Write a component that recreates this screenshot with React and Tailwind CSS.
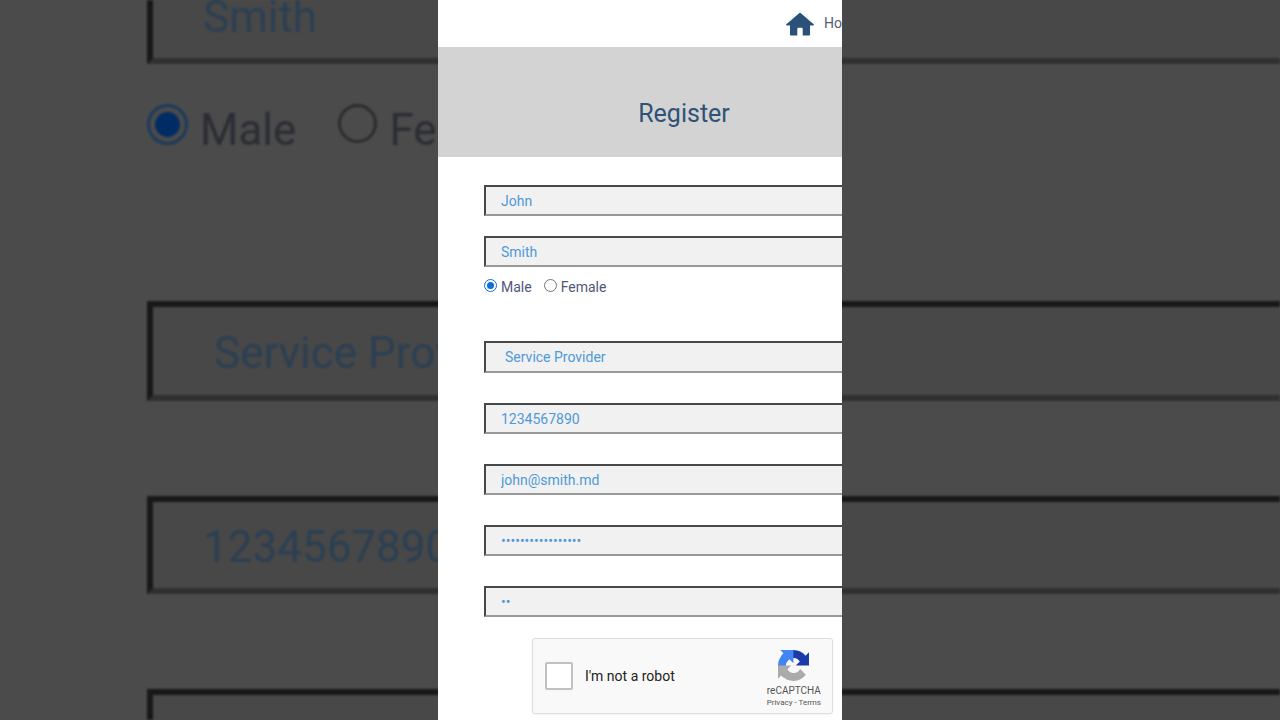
import React from 'react'

const fields = [
  { id: 'phone', label: 'Phone', type: 'tel', value: '1234567890' },
  { id: 'email', label: 'Email', type: 'email', value: 'john@smith.md' },
  { id: 'password', label: 'Password', type: 'password', value: 'johnsmith12345678' },
  { id: 'confirm', label: 'Confirm password', type: 'password', value: 'jo' }
]

const fieldClass =
  'block w-full rounded-none border-2 border-r-0 border-t-[#484848] border-l-[#484848] border-b-[#999999] bg-[#f1f1f1] text-sm text-[#4f99d8] outline-none'

const radioClass =
  'appearance-none size-[13px] rounded-full border border-[#767676] p-[2px] bg-clip-content checked:border-[#0b6fd8] checked:bg-[#0b6fd8]'

const bigFieldClass =
  'block w-full shrink-0 pt-1 rounded-none border-[6px] border-r-0 border-t-[#181818] border-l-[#181818] border-b-[#303030] bg-[#484848] text-[44px] text-[#2b3f52] outline-none'

const bigRadioClass =
  'appearance-none rounded-full border-[3px] border-[#2c2c2c] p-[5px] bg-clip-content checked:border-[#1b3a5c] checked:bg-[#002c66]'

function HomeIcon() {
  return (
    <svg viewBox="0 0 28 24" className="w-7 h-6 shrink-0" fill="#2a5278" aria-hidden="true">
      <path d="M14 0.4 0.3 12.2c-.5.5-.1 1.2.6 1.2H4v9.2c0 .6.4 1 1 1h6.3v-7.2c0-.4.3-.7.7-.7h4c.4 0 .7.3.7.7v7.2H23c.6 0 1-.4 1-1v-9.2h3.1c.7 0 1.1-.7.6-1.2z" />
    </svg>
  )
}

function RecaptchaLogo() {
  return (
    <svg viewBox="0 0 64 64" className="size-[31px]" aria-hidden="true">
      <path
        fill="#1c3aa9"
        d="M64 31.955l-.033-1.37V4.687l-7.16 7.16C50.948 4.674 42.033.093 32.05.093c-10.4 0-19.622 4.96-25.458 12.64l11.736 11.86a15.55 15.55 0 0 1 4.754-5.334c2.05-1.6 4.952-2.906 8.968-2.906.485 0 .86.057 1.135.163 4.976.393 9.288 3.14 11.828 7.124l-8.307 8.307L64 31.953"
      />
      <path
        fill="#4285f4"
        d="M31.862.094l-1.37.033H4.594l7.16 7.16C4.58 13.147 0 22.06 0 32.046c0 10.4 4.96 19.622 12.64 25.458L24.5 45.768a15.55 15.55 0 0 1-5.334-4.754c-1.6-2.05-2.906-4.952-2.906-8.968 0-.485.057-.86.163-1.135.393-4.976 3.14-9.288 7.124-11.828l8.307 8.307L31.86.095"
      />
      <path
        fill="#ababab"
        d="M.001 32.045l.033 1.37v25.898l7.16-7.16c5.86 7.173 14.774 11.754 24.76 11.754 10.4 0 19.622-4.96 25.458-12.64l-11.736-11.86a15.55 15.55 0 0 1-4.754 5.334c-2.05 1.6-4.952 2.906-8.968 2.906-.485 0-.86-.057-1.135-.163-4.976-.393-9.288-3.14-11.828-7.124l8.307-8.307-31.3.001"
      />
    </svg>
  )
}

// Enlarged, darkened copy of the form shown behind the panel
function Backdrop() {
  return (
    <div
      className="col-start-1 row-start-1 h-screen overflow-hidden flex flex-col pl-[147px] bg-[#4b4b4b] blur-[1px]"
      aria-hidden="true"
      inert
    >
      <input className={`${bigFieldClass} h-[98px] pl-[50px] -mt-[34px]`} defaultValue="Smith" />
      <div className="mt-10 flex items-start text-[44px] leading-[52px] text-[#2a2d33]">
        <label className="flex items-start gap-3">
          <input type="radio" name="bigGender" defaultChecked className={`${bigRadioClass} size-[41px]`} />
          Male
        </label>
        <label className="ml-[42px] flex items-start gap-3">
          <input type="radio" name="bigGender" className={`${bigRadioClass} size-[39px]`} />
          Female
        </label>
      </div>
      <input className={`${bigFieldClass} h-[100px] pl-[61px] mt-[145px]`} defaultValue="Service Provider" />
      <input className={`${bigFieldClass} h-[98px] pl-[50px] mt-[95px]`} defaultValue="1234567890" />
      <input className={`${bigFieldClass} h-[98px] pl-[50px] mt-[95px]`} defaultValue="" />
    </div>
  )
}

function Recaptcha() {
  return (
    <div className="mt-[21px] ml-12 mr-[9px] h-[76px] flex items-center justify-between pl-3 pr-[11px] rounded-[3px] border border-[#dedede] bg-[#f9f9f9] shadow-xs">
      <label className="flex items-center gap-3 text-sm text-[#222222]">
        <input
          type="checkbox"
          className="appearance-none size-7 rounded-[2px] border-2 border-[#c1c1c1] bg-white"
        />
        I'm not a robot
      </label>
      <div className="pt-[7px] flex flex-col items-center text-[#555555]">
        <RecaptchaLogo />
        <span className="mt-1 text-[10px] leading-3">reCAPTCHA</span>
        <span className="text-[8px] leading-3 whitespace-pre">
          <a href="#privacy">Privacy</a> - <a href="#terms">Terms</a>
        </span>
      </div>
    </div>
  )
}

function RegisterPanel() {
  return (
    <main className="col-start-1 row-start-1 z-10 justify-self-center w-full max-w-[404px] h-screen overflow-hidden bg-white">
      <nav className="h-[47px] flex items-center justify-end">
        <a
          href="#home"
          className="w-14 flex items-center gap-[10px] overflow-hidden whitespace-nowrap text-sm text-[#565c70]"
        >
          <HomeIcon />
          <span className="pb-0.5">Home</span>
        </a>
      </nav>

      <header className="h-[110px] flex items-center justify-center pt-6 pl-[88px] bg-[#d3d3d3]">
        <h1 className="text-[25px] text-[#2f5276]">Register</h1>
      </header>

      <form className="pt-7 pl-[46px]">
        <input aria-label="First name" className={`${fieldClass} h-[31px] pl-[15px]`} defaultValue="John" />
        <input aria-label="Last name" className={`${fieldClass} h-[31px] pl-[15px] mt-5`} defaultValue="Smith" />

        <div className="mt-3 flex items-start text-sm leading-4 text-[#4f5878]">
          <label className="flex items-start gap-1">
            <input type="radio" name="gender" defaultChecked className={radioClass} />
            Male
          </label>
          <label className="ml-3 flex items-start gap-1">
            <input type="radio" name="gender" className={radioClass} />
            Female
          </label>
        </div>

        <select
          aria-label="Account type"
          className={`${fieldClass} appearance-none h-8 pl-[19px] mt-[46px]`}
        >
          <option>Service Provider</option>
        </select>

        {fields.map((field) => (
          <input
            key={field.id}
            id={field.id}
            type={field.type}
            aria-label={field.label}
            defaultValue={field.value}
            className={`${fieldClass} h-[31px] pl-[15px] mt-[30px]`}
          />
        ))}

        <Recaptcha />
      </form>
    </main>
  )
}

function App() {
  return (
    <div className="grid grid-cols-1 overflow-hidden bg-[#4b4b4b] font-[Roboto,sans-serif]">
      <Backdrop />
      <RegisterPanel />
    </div>
  )
}

export default App
